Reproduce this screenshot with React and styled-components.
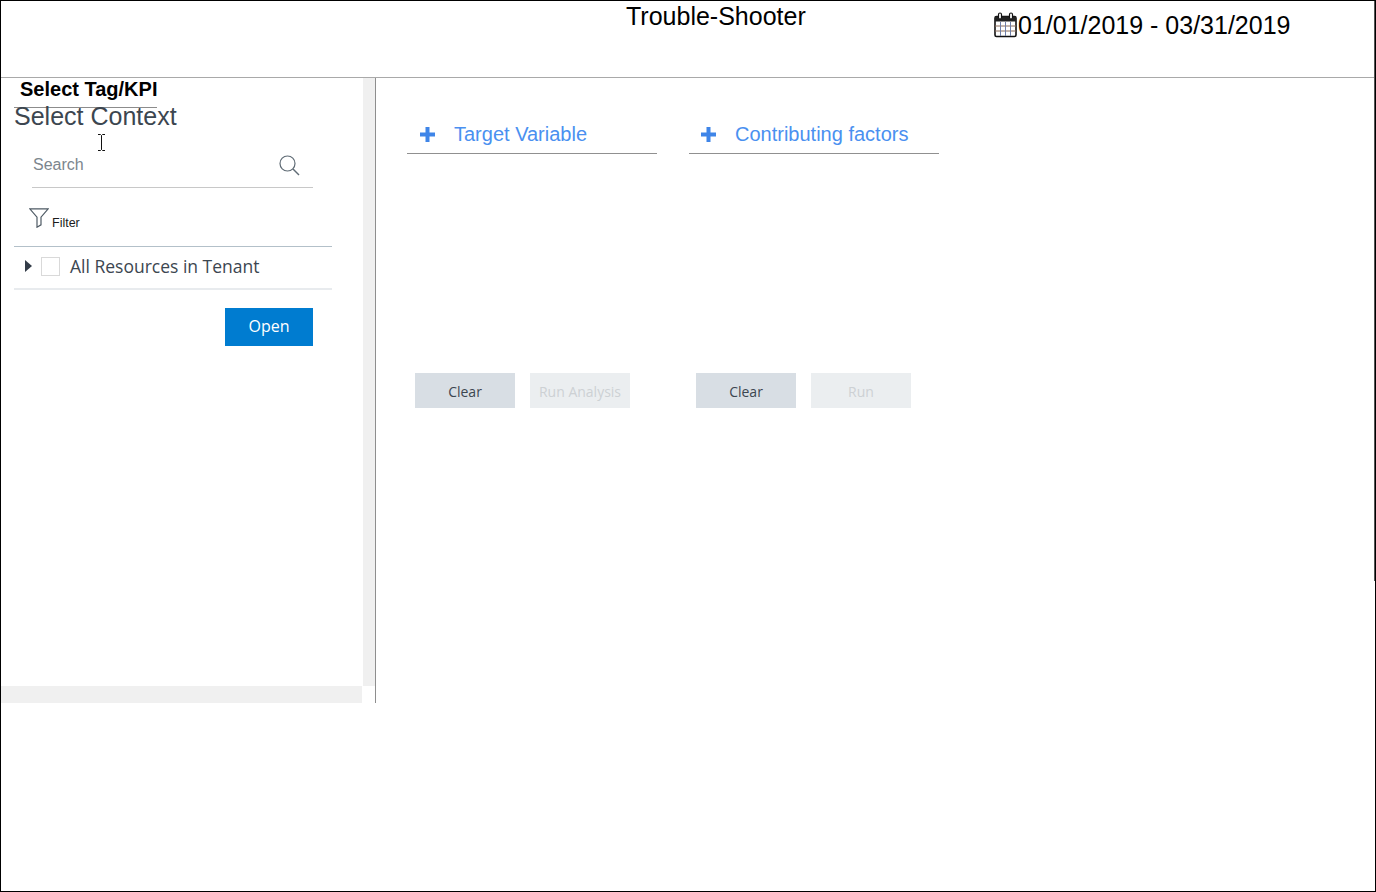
import React from "react";
import styled, { createGlobalStyle } from "styled-components";

const Global = createGlobalStyle`
  html, body { margin: 0; padding: 0; background: #fff; }
  * { box-sizing: border-box; }
  body { font-family: "Liberation Sans", Arial, sans-serif; }
`;

const Frame = styled.div`
  position: relative;
  width: 1376px;
  height: 892px;
  border: 1px solid #000;
  background: #fff;
  overflow: hidden;
  &::after {
    content: "";
    position: absolute;
    top: 0;
    right: 0;
    width: 1px;
    height: 580px;
    background: #555;
  }
`;

const Header = styled.header`
  height: 77px;
  border-bottom: 1px solid #a9a9a9;
  display: flex;
  align-items: flex-start;
`;

const Title = styled.h1`
  margin: 0 0 0 625px;
  width: 367px;
  font-size: 25px;
  font-weight: 400;
  line-height: 28px;
  padding-top: 1px;
  color: #000;
`;

const DateRange = styled.div`
  display: flex;
  align-items: center;
  margin-left: 1px;
  padding-top: 10px;
  font-size: 25px;
  line-height: 28px;
  color: #000;
`;

const Main = styled.main`
  display: flex;
  height: 625px;
`;

const Side = styled.aside`
  width: 375px;
  flex: none;
  border-right: 1px solid #8e8e8e;
  display: flex;
  flex-direction: column;
`;

const SideBody = styled.div`
  flex: 1;
  min-height: 0;
  display: flex;
`;

const SideContent = styled.div`
  width: 362px;
  flex: none;
  position: relative;
`;

const VTrack = styled.div`
  width: 12px;
  flex: none;
  background: #f0f0f0;
`;

const HTrack = styled.div`
  width: 361px;
  height: 17px;
  flex: none;
  background: #f0f0f0;
`;

const TagTitle = styled.div`
  margin-left: 13px;
  width: 143px;
  height: 30px;
  padding: 0 0 0 6px;
  border-bottom: 1px solid #8c8c8c;
  font-size: 20px;
  line-height: 22px;
  font-weight: 700;
  color: #000;
  white-space: nowrap;
`;

const ContextTitle = styled.h2`
  margin: -5px 0 0 13px;
  font-size: 25px;
  font-weight: 400;
  line-height: 26px;
  color: #3c4650;
`;

const SearchRow = styled.div`
  margin: 21px 0 0 31px;
  width: 281px;
  height: 38px;
  padding: 0 13px 7px 1px;
  border-bottom: 1px solid #c8c8c8;
  display: flex;
  align-items: center;
  justify-content: space-between;
  font-size: 16px;
  color: #7c868e;
`;

const SearchLabel = styled.span`
  margin-bottom: 1px;
`;

const FilterRow = styled.div`
  margin: 20px 0 0 28px;
  height: 22px;
  display: flex;
  align-items: flex-start;
  gap: 3px;
  font-size: 12.5px;
  line-height: 14px;
  color: #1c1c1c;
`;

const FilterLabel = styled.span`
  margin-top: 8px;
`;

const Tree = styled.div`
  margin: 16px 0 0 13px;
  width: 318px;
  height: 44px;
  border-top: 1px solid #b3c0c9;
  border-bottom: 2px solid #e8ebee;
  padding: 0 0 3px 11px;
  display: flex;
  align-items: center;
  font-family: "Open Sans", sans-serif;
  font-size: 17.5px;
  color: #3c4650;
`;

const Caret = styled.span`
  width: 0;
  height: 0;
  border-style: solid;
  border-width: 6px 0 6px 7px;
  border-color: transparent transparent transparent #333c48;
  margin-right: 9px;
`;

const Check = styled.span`
  width: 19px;
  height: 19px;
  border: 1px solid #d9d9d9;
  background: #fff;
  margin-right: 10px;
`;

const SideActions = styled.div`
  margin: 18px 0 0;
  width: 312px;
  display: flex;
  justify-content: flex-end;
`;

const OpenButton = styled.button`
  width: 88px;
  height: 38px;
  border: 0;
  background: #007cd0;
  color: #fff;
  font-family: "Open Sans", sans-serif;
  font-size: 16px;
  padding: 0 0 2px;
`;

const Cursor = styled.svg`
  position: absolute;
  left: 96px;
  top: 56px;
`;

const Work = styled.section`
  flex: 1;
  padding: 35px 0 0 31px;
`;

const Columns = styled.div`
  display: flex;
  gap: 32px;
`;

const Column = styled.div`
  width: 250px;
`;

const AddRow = styled.div`
  height: 41px;
  border-bottom: 1px solid #909090;
  display: flex;
  align-items: center;
  padding: 2px 0 0 ${p => p.$inset}px;
  font-size: 20px;
  color: #4a90f0;
  gap: 18px;
`;

const Actions = styled.div`
  display: flex;
  gap: 15px;
  margin: 219px 0 0 ${p => p.$inset}px;
`;

const Btn = styled.button`
  width: 100px;
  height: 35px;
  border: 0;
  padding: 2px 0 0;
  background: ${p => (p.disabled ? "#ebeef0" : "#d8dee4")};
  color: ${p => (p.disabled ? "#cdd1d4" : "#3c4650")};
  font-family: "Open Sans", sans-serif;
  font-size: 14px;
`;

const Plus = () => (
  <svg width="17" height="17" viewBox="0 0 17 17" aria-hidden="true">
    <path d="M8.5 1v15M1 8.5h15" stroke="#3f85e8" strokeWidth="4" fill="none" />
  </svg>
);

const Calendar = () => (
  <svg width="24" height="26" viewBox="0 0 24 26" aria-hidden="true">
    <rect x="1" y="4.5" width="21" height="20" rx="1.5" fill="#fff" stroke="#111" strokeWidth="1.6" />
    <rect x="1" y="4.5" width="21" height="5" fill="#222" />
    <path d="M1 14h21M1 19h21" stroke="#8a6d5a" strokeWidth="1" />
    <path d="M6.5 10v14M11.5 10v14M16.5 10v14" stroke="#6f7fa8" strokeWidth="1" />
    <rect x="4.5" y="1" width="3" height="6" rx="1.5" fill="#fff" stroke="#111" strokeWidth="1.2" />
    <rect x="15.5" y="1" width="3" height="6" rx="1.5" fill="#fff" stroke="#111" strokeWidth="1.2" />
  </svg>
);

export default function App() {
  return (
    <Frame>
      <Global />
      <Header>
        <Title>Trouble-Shooter</Title>
        <DateRange>
          <Calendar />
          01/01/2019 - 03/31/2019
        </DateRange>
      </Header>
      <Main>
        <Side>
          <SideBody>
            <SideContent>
              <TagTitle>Select Tag/KPI</TagTitle>
              <ContextTitle>Select Context</ContextTitle>
              <Cursor width="9" height="17" viewBox="0 0 9 17" aria-hidden="true">
                <path d="M1 .5h2.5l1 1 1-1H8M4.5 1.5v14M1 16.5h2.5l1-1 1 1H8" stroke="#111" strokeWidth="1" fill="none" />
              </Cursor>
              <SearchRow>
                <SearchLabel>Search</SearchLabel>
                <svg width="21" height="21" viewBox="0 0 21 21" aria-hidden="true">
                  <circle cx="8.5" cy="8.5" r="7.5" stroke="#5f6b75" strokeWidth="1.2" fill="none" />
                  <path d="M14 14l6 6" stroke="#5f6b75" strokeWidth="1.4" fill="none" />
                </svg>
              </SearchRow>
              <FilterRow>
                <svg width="20" height="20" viewBox="0 0 20 20" aria-hidden="true">
                  <path d="M.8.8h18.4l-7.2 8.4v7.6l-4 2.4V9.2z" stroke="#4e5a64" strokeWidth="1.2" fill="none" />
                </svg>
                <FilterLabel>Filter</FilterLabel>
              </FilterRow>
              <Tree>
                <Caret />
                <Check />
                All Resources in Tenant
              </Tree>
              <SideActions>
                <OpenButton>Open</OpenButton>
              </SideActions>
            </SideContent>
            <VTrack />
          </SideBody>
          <HTrack />
        </Side>
        <Work>
          <Columns>
            <Column>
              <AddRow $inset={12}><Plus />Target Variable</AddRow>
              <Actions $inset={8}>
                <Btn>Clear</Btn>
                <Btn disabled>Run Analysis</Btn>
              </Actions>
            </Column>
            <Column>
              <AddRow $inset={11}><Plus />Contributing factors</AddRow>
              <Actions $inset={7}>
                <Btn>Clear</Btn>
                <Btn disabled>Run</Btn>
              </Actions>
            </Column>
          </Columns>
        </Work>
      </Main>
    </Frame>
  );
}
